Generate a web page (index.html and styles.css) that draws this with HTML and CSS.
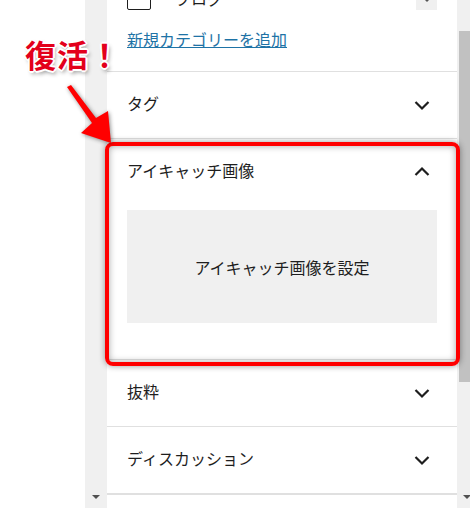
FILE: index.html
```html
<!DOCTYPE html>
<html lang="ja">

<head>
    <meta charset="UTF-8">
    <title>投稿設定</title>
    <link rel="stylesheet" href="styles.css">
</head>

<body>

    <div class="screen">
        <!-- left blank area -->
        <div class="blank"></div>

        <!-- editor scroll gutter -->
        <div class="gutter">
            <span class="scroll-arrow"></span>
        </div>

        <!-- sidebar panel -->
        <div class="panel">
            <div class="categories">
                <div class="cat-item">
                    <span class="checkbox"></span>
                    <span class="cat-label">ブログ</span>
                    <span class="cat-scroll"><span class="mini-arrow"></span></span>
                </div>
                <a class="add-link" href="#">新規カテゴリーを追加</a>
            </div>

            <div class="section">
                <div class="section-head">
                    <span class="label">タグ</span>
                    <svg class="chevron" viewBox="0 0 24 24"><polyline points="5.5,9 12,15.5 18.5,9" /></svg>
                </div>
            </div>

            <div class="section">
                <div class="section-head">
                    <span class="label">アイキャッチ画像</span>
                    <svg class="chevron" viewBox="0 0 24 24"><polyline points="5.5,15 12,8.5 18.5,15" /></svg>
                </div>
                <div class="section-body">
                    <div class="featured-box">アイキャッチ画像を設定</div>
                </div>
            </div>

            <div class="section">
                <div class="section-head">
                    <span class="label">抜粋</span>
                    <svg class="chevron" viewBox="0 0 24 24"><polyline points="5.5,9 12,15.5 18.5,9" /></svg>
                </div>
            </div>

            <div class="section">
                <div class="section-head">
                    <span class="label">ディスカッション</span>
                    <svg class="chevron" viewBox="0 0 24 24"><polyline points="5.5,9 12,15.5 18.5,9" /></svg>
                </div>
            </div>

            <div class="section last"></div>
        </div>

        <!-- window scrollbar -->
        <div class="scrollbar">
            <div class="thumb"></div>
            <span class="scroll-arrow"></span>
        </div>
    </div>

    <!-- annotation -->
    <div class="highlight"></div>
    <div class="note">復活！</div>
    <svg class="note-arrow" width="120" height="150" viewBox="0 0 120 150">
        <polygon points="67,87 71,85 96,118 108,111 111,143 81,133 92,123" />
    </svg>

</body>

</html>
```

FILE: styles.css
```css
body {
    margin: 0;
    font-family: "Noto Sans CJK JP", "Noto Sans", sans-serif;
    color: #1e1e1e;
    background: #fff;
    overflow: hidden;
}

.screen {
    display: flex;
    height: 508px;
}

.blank {
    width: 85px;
    flex-shrink: 0;
}

.gutter {
    width: 22px;
    flex-shrink: 0;
    background: #f0f0f0;
    display: flex;
    flex-direction: column;
    justify-content: flex-end;
    align-items: center;
    padding-bottom: 9px;
    box-sizing: border-box;
}

.scroll-arrow {
    width: 0;
    height: 0;
    border-left: 4px solid transparent;
    border-right: 4px solid transparent;
    border-top: 4px solid #505050;
}

.panel {
    width: 350px;
    flex-shrink: 0;
    background: #fff;
}

/* categories (scrolled, partly hidden) */
.categories {
    padding: 0 20px 20px;
}

.cat-item {
    display: flex;
    align-items: center;
    height: 24px;
    margin-top: -14px;
}

.checkbox {
    width: 22px;
    height: 22px;
    border: 1px solid #1e1e1e;
    border-radius: 2px;
}

.cat-label {
    margin-left: 24px;
    font-size: 16px;
}

.cat-scroll {
    margin-left: auto;
    width: 21px;
    height: 24px;
    background: #f0f0f0;
    display: flex;
    justify-content: center;
    align-items: flex-end;
    padding-bottom: 8px;
    box-sizing: border-box;
}

.mini-arrow {
    width: 0;
    height: 0;
    border-left: 3px solid transparent;
    border-right: 3px solid transparent;
    border-top: 3px solid #555;
}

.add-link {
    display: block;
    margin-top: 17px;
    font-size: 16px;
    line-height: 24px;
    color: #1e73a6;
}

/* sidebar sections */
.section {
    border-top: 1px solid #e0e0e0;
}

.section.last {
    border-top-width: 2px;
}

.section-head {
    display: flex;
    align-items: center;
    justify-content: space-between;
    height: 66px;
    padding: 0 23px 0 20px;
    font-size: 16px;
}

.section-head .label {
    margin-bottom: 4px;
}

.chevron {
    width: 24px;
    height: 24px;
    fill: none;
    stroke: #1e1e1e;
    stroke-width: 2.2;
}

.section-body {
    padding: 5px 20px 36px;
}

.featured-box {
    height: 113px;
    background: #f0f0f0;
    display: flex;
    align-items: center;
    justify-content: center;
    font-size: 16px;
}

.scrollbar {
    width: 13px;
    flex-shrink: 0;
    background: #f0f0f0;
    display: flex;
    flex-direction: column;
    align-items: flex-end;
    padding: 31px 0 9px;
    box-sizing: border-box;
}

.thumb {
    width: 11px;
    height: 351px;
    background: #c1c1c1;
}

.scrollbar .scroll-arrow {
    margin-top: auto;
    margin-right: -1px;
}

/* annotation overlay */
.highlight {
    position: absolute;
    left: 105px;
    top: 142px;
    width: 347px;
    height: 216px;
    border: 4px solid #ff0000;
    border-radius: 8px;
    box-shadow: 0 0 6px rgba(0, 0, 0, 0.4), inset 0 0 7px rgba(0, 0, 0, 0.35);
}

.note {
    position: absolute;
    left: 25px;
    top: 35px;
    font-size: 31px;
    font-weight: bold;
    line-height: 38px;
    letter-spacing: 1px;
    color: #e3001b;
    text-shadow: -2px 0 #fff, 2px 0 #fff, 0 -2px #fff, 0 2px #fff,
        -1px -1px #fff, 1px 1px #fff, -1px 1px #fff, 1px -1px #fff,
        2px 3px 4px rgba(0, 0, 0, 0.45);
}

.note-arrow {
    position: absolute;
    left: 0;
    top: 0;
    fill: #ff0000;
    filter: drop-shadow(1px 1px 2px rgba(0, 0, 0, 0.45));
}
```
